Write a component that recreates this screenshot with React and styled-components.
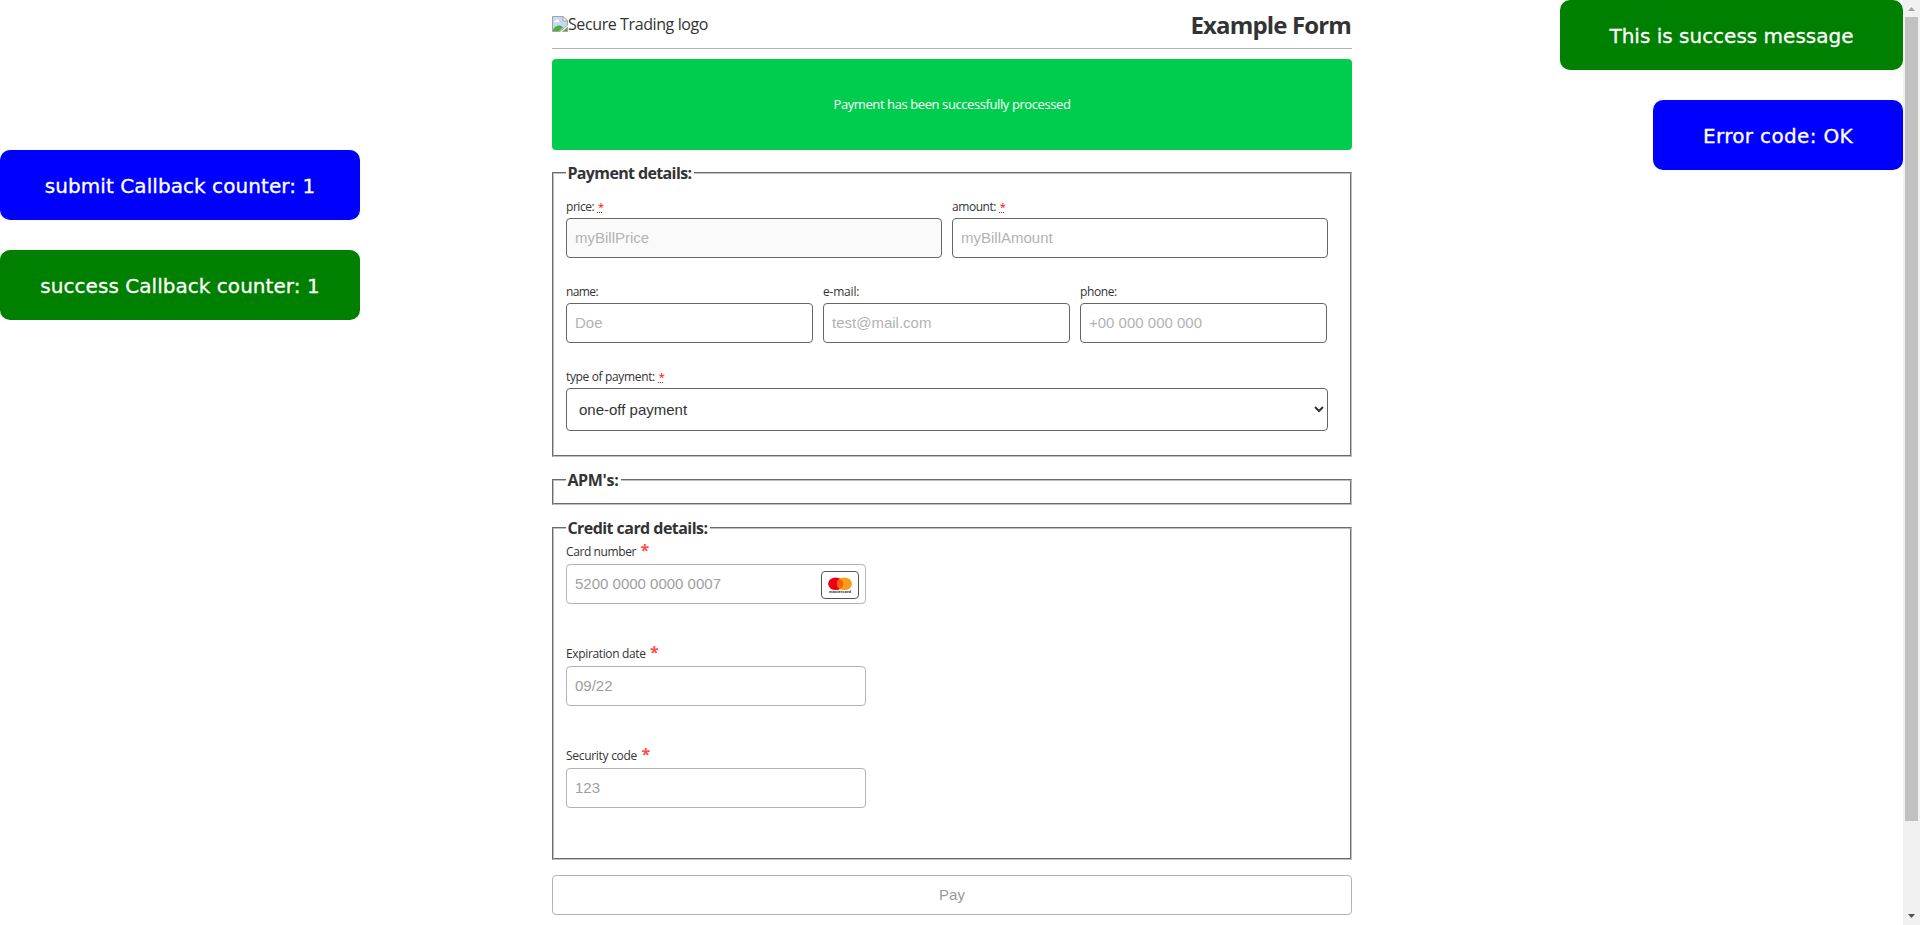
import React from 'react';
import styled, { createGlobalStyle } from 'styled-components';

const sans = '"Open Sans", "Noto Sans", sans-serif';
const arial = '"Liberation Sans", Arial, sans-serif';

const GlobalStyle = createGlobalStyle`
  *, *::before, *::after { box-sizing: border-box; }
  html, body { margin: 0; height: 925px; overflow: hidden; background: #fff; }
  body { font: 16px/24px ${sans}; color: #333; }
`;

const Viewport = styled.div`
  position: relative;
  display: flex;
  height: 925px;
  overflow: hidden;
`;

const Page = styled.main`
  flex: 1;
  display: flex;
  justify-content: center;
  padding-left: 1px;
`;

const Column = styled.div`
  width: 800px;
  display: flex;
  flex-direction: column;
`;

const Header = styled.header`
  display: flex;
  align-items: center;
  justify-content: space-between;
  height: 49px;
  border-bottom: 1px solid #b3b3b3;
`;

const Logo = styled.div`
  display: flex;
  align-items: center;
  letter-spacing: -0.401px;
  svg { display: block; }
`;

const Title = styled.h1`
  margin: 0;
  padding: 2px 1px 0 0;
  font-size: 24px;
  line-height: 32px;
  font-weight: 700;
  letter-spacing: -0.86px;
`;

const Alert = styled.div`
  display: flex;
  align-items: center;
  justify-content: center;
  height: 91px;
  margin: 10px 0 11px;
  padding-bottom: 2px;
  border-radius: 4px;
  background: #00cd4d;
  color: #fff;
  font-size: 13px;
  letter-spacing: -0.408px;
`;

const Group = styled.fieldset`
  min-width: 0;
  height: ${(p) => p.$height}px;
  margin: 0 0 ${(p) => p.$after}px;
  padding: ${(p) => p.$top || 0}px 22px 0 12px;
  border: 2px groove #c0c0c0;
`;

const Legend = styled.legend`
  height: 24px;
  padding: 0 2.6px 0 1.4px;
  font-weight: 700;
  white-space: nowrap;
  letter-spacing: ${(p) => p.$track}px;
`;

const Fields = styled.div`
  display: flex;
  flex-direction: column;
  gap: ${(p) => p.$gap}px;
`;

const Row = styled.div`
  display: flex;
  gap: 10px;
  padding-right: ${(p) => p.$inset || 0}px;
`;

const FieldBox = styled.label`
  flex: 1;
  min-width: 0;
  display: flex;
  flex-direction: column;
  gap: 4px;
`;

const Caption = styled.span`
  height: 16px;
  font-size: 12px;
  line-height: ${(p) => p.$line || 16}px;
  white-space: nowrap;
  letter-spacing: ${(p) => p.$track}px;
`;

const Required = styled.abbr`
  margin-left: 1px;
  color: #f00;
  font-size: 11px;
  text-decoration: underline dotted #f00 1px;
  text-underline-offset: 1px;
`;

const Input = styled.input`
  width: 100%;
  height: 40px;
  padding: 0 8px 2px;
  border: 1px solid #666;
  border-radius: 4px;
  background: ${(p) => (p.$muted ? '#fafafa' : '#fff')};
  font: 15px ${arial};
  color: #333;
  &::placeholder { color: #b3b3b3; opacity: 1; }
`;

const Select = styled.select`
  width: 100%;
  height: 43px;
  padding: 0 0 0 8px;
  border: 1px solid #666;
  border-radius: 4px;
  background: #fff;
  font: 15px ${arial};
  color: #333;
`;

const CardField = styled.div`
  width: 300px;
  display: flex;
  flex-direction: column;
  gap: 4px;
`;

const Star = styled.span`
  margin-left: 4.5px;
  color: #ff4d4d;
  font-size: 16px;
  font-weight: 700;
  line-height: 0;
`;

const CardControl = styled.div`
  display: flex;
  align-items: center;
  justify-content: space-between;
  height: 40px;
  padding: 0 6px 2px 8px;
  border: 1px solid #b3b3b3;
  border-radius: 4px;
  font: 15px ${arial};
  color: #a0a0a0;
`;

const Brand = styled.span`
  width: 38px;
  height: 28px;
  margin-top: 4px;
  border: 1px solid #555;
  border-radius: 4px;
  svg { display: block; }
`;

const PayButton = styled.button`
  height: 40px;
  padding: 0 0 2px;
  border: 1px solid #b3b3b3;
  border-radius: 4px;
  background: #fff;
  color: #999;
  font: 15px ${arial};
`;

const Toasts = styled.div`
  position: absolute;
  top: ${(p) => p.$top}px;
  ${(p) => (p.$side === 'left' ? 'left: 0;' : 'right: 17px;')}
  display: flex;
  flex-direction: column;
  align-items: flex-end;
  gap: 30px;
`;

const Toast = styled.div`
  display: flex;
  align-items: center;
  justify-content: center;
  width: ${(p) => p.$width}px;
  height: 70px;
  padding-top: 1px;
  border-radius: 10px;
  background: ${(p) => p.$color};
  color: #fff;
  font: 20px "DejaVu Sans", Verdana, sans-serif;
  letter-spacing: ${(p) => p.$track || 0}px;
  -webkit-text-stroke: 0.3px #fff;
  white-space: nowrap;
`;

const Scrollbar = styled.div`
  width: 17px;
  display: flex;
  flex-direction: column;
  align-items: center;
  background: #f1f1f1;
`;

const Arrow = styled.svg`
  display: block;
  width: 17px;
  height: 17px;
  flex: none;
  fill: ${(p) => p.$fill};
`;

const Track = styled.div`
  flex: 1;
`;

const Thumb = styled.div`
  width: 13px;
  height: 804px;
  background: #c1c1c1;
`;

function BrokenImage() {
  return (
    <svg width="16" height="16" viewBox="0 0 16 16">
      <path d="M0.5 0.5H11L15.5 5V9L8 15.5H0.5Z" fill="#c5d8f7" stroke="#a3a3a3" />
      <path d="M2 6.2q0-1.6 1.6-1.6q.5-1.6 2.1-1.2q1.3.3 1.2 1.5q1.1.1 1.1 1.3Z" fill="#fff" />
      <path d="M1 15V13.5Q4 9 8 9.5Q10 9.8 11 11.5L7 15Z" fill="#4fae36" />
      <path d="M11 0.5V5H15.5Z" fill="#fff" stroke="#a3a3a3" />
      <path d="M15.5 11V15.5H10.5Z" fill="#4fae36" />
      <path d="M15.5 11V15.5H10.5" fill="none" stroke="#a3a3a3" />
    </svg>
  );
}

function Mastercard() {
  return (
    <Brand>
      <svg width="36" height="26" viewBox="0 0 36 26">
        <ellipse cx="13.7" cy="11.8" rx="7.6" ry="6.3" fill="#eb001b" />
        <ellipse cx="22.4" cy="11.8" rx="7.6" ry="6.3" fill="#f79e1b" />
        <path d="M18.05 6.64A7.6 6.3 0 0 1 18.05 16.96A7.6 6.3 0 0 1 18.05 6.64Z" fill="#ff5f00" />
        <text x="7" y="21.2" fontSize="3.8" fontWeight="700" fontFamily="Liberation Sans, sans-serif" fill="#222" textLength="22" lengthAdjust="spacingAndGlyphs">mastercard</text>
      </svg>
    </Brand>
  );
}

function Field({ label, track, required, children }) {
  return (
    <FieldBox>
      <Caption $track={track} $line={18}>{label}{required && <> <Required>*</Required></>}</Caption>
      {children}
    </FieldBox>
  );
}

function CardEntry({ label, track, value, children }) {
  return (
    <CardField>
      <Caption $track={track}>{label}<Star>*</Star></Caption>
      <CardControl>{value}{children}</CardControl>
    </CardField>
  );
}

export default function App() {
  return (
    <>
      <GlobalStyle />
      <Viewport>
        <Page>
          <Column>
            <Header>
              <Logo><BrokenImage />Secure Trading logo</Logo>
              <Title>Example Form</Title>
            </Header>
            <Alert>Payment has been successfully processed</Alert>
            <Group $height={296} $after={11} $top={13}>
              <Legend $track={-0.629}>Payment details:</Legend>
              <Fields $gap={25}>
                <Row>
                  <Field label="price:" track={-0.45} required><Input placeholder="myBillPrice" $muted readOnly /></Field>
                  <Field label="amount:" track={-0.45} required><Input placeholder="myBillAmount" /></Field>
                </Row>
                <Row $inset={1}>
                  <Field label="name:" track={-0.6}><Input placeholder="Doe" /></Field>
                  <Field label="e-mail:" track={-0.2}><Input placeholder="test@mail.com" /></Field>
                  <Field label="phone:" track={-0.4}><Input placeholder="+00 000 000 000" /></Field>
                </Row>
                <Field label="type of payment:" track={-0.35} required>
                  <Select><option>one-off payment</option></Select>
                </Field>
              </Fields>
            </Group>
            <Group $height={37} $after={11}>
              <Legend $track={-0.324}>APM's:</Legend>
            </Group>
            <Group $height={344} $after={15} $top={4}>
              <Legend $track={-0.546}>Credit card details:</Legend>
              <Fields $gap={42}>
                <CardEntry label="Card number" track={-0.4} value="5200 0000 0000 0007"><Mastercard /></CardEntry>
                <CardEntry label="Expiration date" track={-0.36} value="09/22" />
                <CardEntry label="Security code" track={-0.293} value="123" />
              </Fields>
            </Group>
            <PayButton type="button">Pay</PayButton>
          </Column>
        </Page>
        <Scrollbar>
          <Arrow $fill="#a3a3a3" viewBox="0 0 17 17"><path d="M5 11L8.5 7L12 11Z" /></Arrow>
          <Track><Thumb /></Track>
          <Arrow $fill="#505050" viewBox="0 0 17 17"><path d="M5 6L8.5 10L12 6Z" /></Arrow>
        </Scrollbar>
        <Toasts $side="left" $top={150}>
          <Toast $color="#00f" $width={360} $track={0.07}>submit Callback counter: 1</Toast>
          <Toast $color="#008000" $width={360} $track={0.04}>success Callback counter: 1</Toast>
        </Toasts>
        <Toasts $side="right" $top={0}>
          <Toast $color="#008000" $width={343}>This is success message</Toast>
          <Toast $color="#00f" $width={250} $track={0.34}>Error code: OK</Toast>
        </Toasts>
      </Viewport>
    </>
  );
}
